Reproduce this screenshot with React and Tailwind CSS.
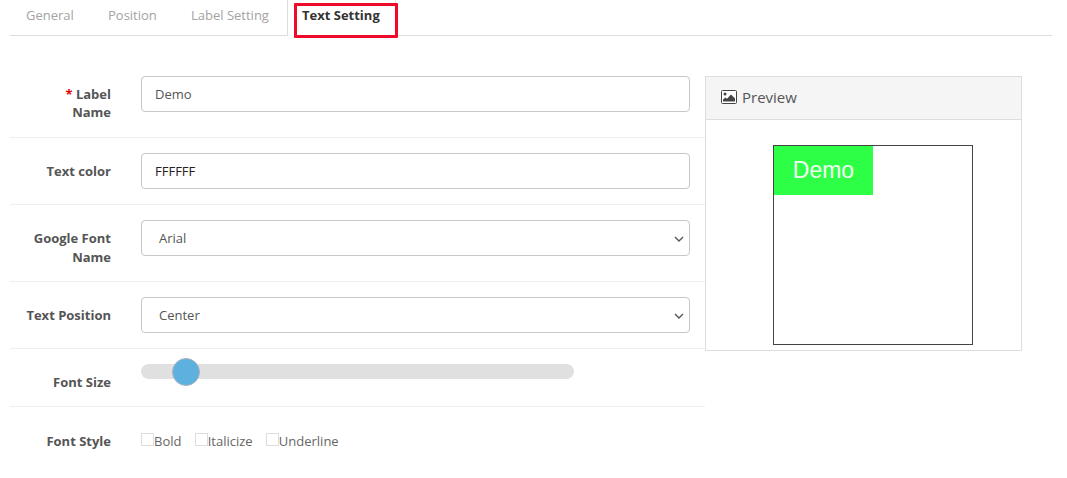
import React from "react";

function Row({ label, children, border = true, h }) {
  return (
    <div className={`flex pt-[15px] ${h} ${border ? "border-b border-[#eeeeee]" : ""}`}>
      <div className="w-[101px] shrink-0 pt-[9px] text-right text-[13px] leading-[18px] font-bold text-[#555555]">{label}</div>
      <div className="ml-[30px] w-[549px]">{children}</div>
    </div>
  );
}

const Chevron = () => (
  <svg className="absolute right-[4px] top-[14px]" width="12" height="8" viewBox="0 0 12 8" fill="none">
    <path d="M2 2l4 4 4-4" stroke="#555555" strokeWidth="1.4" />
  </svg>
);

function TextInput({ value, dark }) {
  return (
    <div className={`flex h-[36px] w-full items-center rounded-[4px] border border-[#c7c7c7] bg-white pl-[13px] pt-px text-[13px] ${dark ? "text-[#222222]" : "text-[#555555]"}`}>
      {value}
    </div>
  );
}

function SelectBox({ value }) {
  return (
    <div className="relative flex h-[36px] w-full items-center rounded-[4px] border border-[#c7c7c7] bg-white pl-[17px] pt-px text-[13px] text-[#555555]">
      {value}
      <Chevron />
    </div>
  );
}

function Check({ label }) {
  return (
    <div className="flex items-start">
      <span className="mt-[1px] h-[13px] w-[13px] border border-[#dddddd] bg-white" />
      <span className="text-[13px] leading-[18px] text-[#666666]">{label}</span>
    </div>
  );
}

export default function App() {
  return (
    <div className="h-[478px] w-[1067px] overflow-hidden bg-white font-['Open_Sans',sans-serif]">
      <div className="relative ml-[10px] flex h-[36px] w-[1042px] border-b border-[#dddddd] text-[13px] leading-[18px]">
        <div className="w-[64px] pl-[16px] pt-[6px] text-[#a3a3a3]">General</div>
        <div className="ml-[34px] w-[48px] pt-[6px] text-[#a3a3a3]">Position</div>
        <div className="ml-[35px] w-[96px] pt-[6px] text-[#a3a3a3]">Label Setting</div>
        <div className="-mb-px h-[36px] w-[109px] border-x border-[#dddddd] bg-white pl-[14px] pt-[6px] font-bold text-[#333333]">
          Text Setting
        </div>
        <div className="absolute left-[284px] top-[3px] h-[35px] w-[104px] rounded-[1px] border-[3px] border-[#f00a2a]" />
      </div>

      <div className="ml-[10px] mt-[25px] flex items-start">
        <div className="w-[695px]">
          <Row h="h-[77px]" label={<><span className="text-[#e00000]">* </span>Label<br />Name</>}>
            <TextInput value="Demo" />
          </Row>
          <Row h="h-[67px]" label="Text color">
            <TextInput value="FFFFFF" dark />
          </Row>
          <Row h="h-[77px]" label={<>Google Font<br /><span className="relative top-px">Name</span></>}>
            <SelectBox value="Arial" />
          </Row>
          <Row h="h-[67px]" label="Text Position">
            <SelectBox value="Center" />
          </Row>
          <div className="flex h-[58px] border-b border-[#eeeeee] pt-[15px]">
            <div className="w-[101px] shrink-0 pt-[9px] text-right text-[13px] leading-[18px] font-bold text-[#555555]">Font Size</div>
            <div className="relative ml-[30px] mt-0 h-[15px] w-[433px] rounded-[8px] bg-[#e0e0e0]">
              <div className="absolute left-[31px] top-[-6px] h-[28px] w-[28px] rounded-full border border-[#aab4bb] bg-[#5eb0de]" />
            </div>
          </div>
          <div className="flex pt-[25px]">
            <div className="w-[101px] shrink-0 text-right text-[13px] leading-[18px] font-bold text-[#555555]">Font Style</div>
            <div className="ml-[30px] flex gap-[13.2px]">
              <Check label="Bold" />
              <Check label="Italicize" />
              <Check label="Underline" />
            </div>
          </div>
        </div>

        <div className="mt-[15px] h-[275px] w-[317px] border border-[#dddddd]">
          <div className="flex h-[43px] items-center gap-[5px] border-b border-[#dddddd] bg-[#f5f5f5] pb-[2px] pl-[15px] text-[15px] text-[#555555]">
            <svg width="16" height="14" viewBox="0 0 16 14" fill="none">
              <rect x="0.5" y="0.5" width="15" height="13" rx="1" stroke="#444444" fill="white" />
              <circle cx="4" cy="4" r="1.5" fill="#444444" />
              <path d="M2 11.5V9.5l2.5-2 1.5 1.2L10 4.5l4 4v3z" fill="#444444" />
            </svg>
            Preview
          </div>
          <div className="ml-[67px] mt-[25px] h-[200px] w-[200px] border border-[#444444] bg-white">
            <div className="flex h-[49px] w-[99px] items-center justify-center bg-[#2dff47] font-['Liberation_Sans',sans-serif] text-[23px] text-[#f4fff4]">
              Demo
            </div>
          </div>
        </div>
      </div>
    </div>
  );
}
